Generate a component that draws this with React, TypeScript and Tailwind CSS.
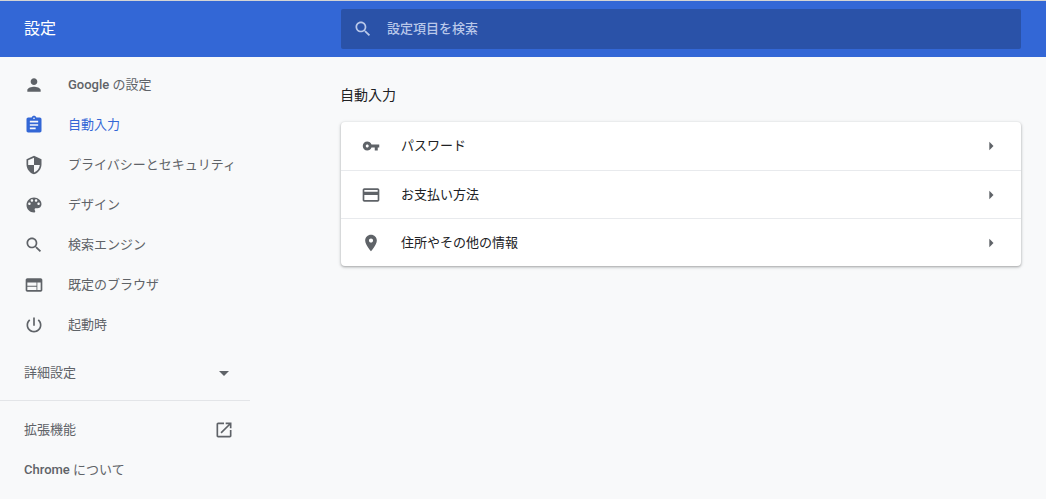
const ICONS = {
  person: 'M12 12c2.21 0 4-1.79 4-4s-1.79-4-4-4-4 1.79-4 4 1.79 4 4 4zm0 2c-2.67 0-8 1.34-8 4v2h16v-2c0-2.66-5.33-4-8-4z',
  assignment: 'M19 3h-4.18C14.4 1.84 13.3 1 12 1c-1.3 0-2.4.84-2.82 2H5c-1.1 0-2 .9-2 2v14c0 1.1.9 2 2 2h14c1.1 0 2-.9 2-2V5c0-1.1-.9-2-2-2zm-7 0c.55 0 1 .45 1 1s-.45 1-1 1-1-.45-1-1 .45-1 1-1zm2 14H7v-2h7v2zm3-4H7v-2h10v2zm0-4H7V7h10v2z',
  security: 'M12 1L3 5v6c0 5.55 3.84 10.74 9 12 5.16-1.26 9-6.45 9-12V5l-9-4zm0 10.99h7c-.53 4.12-3.28 7.79-7 8.94V12H5V6.3l7-3.11v8.8z',
  palette: 'M12 3c-4.97 0-9 4.03-9 9s4.03 9 9 9c.83 0 1.5-.67 1.5-1.5 0-.39-.15-.74-.39-1.01-.23-.26-.38-.61-.38-.99 0-.83.67-1.5 1.5-1.5H16c2.76 0 5-2.24 5-5 0-4.42-4.03-8-9-8zm-5.5 9c-.83 0-1.5-.67-1.5-1.5S5.67 9 6.5 9 8 9.67 8 10.5 7.33 12 6.5 12zm3-4C8.67 8 8 7.33 8 6.5S8.67 5 9.5 5s1.5.67 1.5 1.5S10.33 8 9.5 8zm5 0c-.83 0-1.5-.67-1.5-1.5S13.67 5 14.5 5s1.5.67 1.5 1.5S15.33 8 14.5 8zm3 4c-.83 0-1.5-.67-1.5-1.5S16.67 9 17.5 9s1.5.67 1.5 1.5-.67 1.5-1.5 1.5z',
  search: 'M15.5 14h-.79l-.28-.27C15.41 12.59 16 11.11 16 9.5 16 5.91 13.09 3 9.5 3S3 5.91 3 9.5 5.91 16 9.5 16c1.61 0 3.09-.59 4.23-1.57l.27.28v.79l5 4.99L20.49 19l-4.99-5zm-6 0C7.01 14 5 11.99 5 9.5S7.01 5 9.5 5 14 7.01 14 9.5 11.99 14 9.5 14z',
  web: 'M20 4H4c-1.1 0-1.99.9-1.99 2L2 18c0 1.1.9 2 2 2h16c1.1 0 2-.9 2-2V6c0-1.1-.9-2-2-2zm-5 14H4v-4h11v4zm0-5H4V9h11v4zm5 5h-4V9h4v9z',
  power: 'M13 3h-2v10h2V3zm4.83 2.17l-1.42 1.42C17.99 7.86 19 9.81 19 12c0 3.87-3.13 7-7 7s-7-3.13-7-7c0-2.19 1.01-4.14 2.58-5.42L6.17 5.17C4.23 6.82 3 9.26 3 12c0 4.97 4.03 9 9 9s9-4.03 9-9c0-2.74-1.23-5.18-3.17-6.83z',
  openInNew: 'M19 19H5V5h7V3H5c-1.11 0-2 .9-2 2v14c0 1.1.89 2 2 2h14c1.1 0 2-.9 2-2v-7h-2v7zM14 3v2h3.59l-9.83 9.83 1.41 1.41L19 6.41V10h2V3h-7z',
  key: 'M12.65 10C11.83 7.67 9.61 6 7 6c-3.31 0-6 2.69-6 6s2.69 6 6 6c2.61 0 4.83-1.67 5.65-4H17v4h4v-4h2v-4H12.65zM7 14c-1.1 0-2-.9-2-2s.9-2 2-2 2 .9 2 2-.9 2-2 2z',
  card: 'M20 4H4c-1.11 0-1.99.89-1.99 2L2 18c0 1.11.89 2 2 2h16c1.11 0 2-.89 2-2V6c0-1.11-.89-2-2-2zm0 14H4v-6h16v6zm0-10H4V6h16v2z',
  place: 'M12 2C8.13 2 5 5.13 5 9c0 5.25 7 13 7 13s7-7.75 7-13c0-3.87-3.13-7-7-7zm0 9.5c-1.38 0-2.5-1.12-2.5-2.5s1.12-2.5 2.5-2.5 2.5 1.12 2.5 2.5-1.12 2.5-2.5 2.5z',
  arrowRight: 'M10 17l5-5-5-5v10z',
  arrowDown: 'M7 10l5 5 5-5z',
};

function Icon({ d, className }: { d: string; className: string }) {
  return (
    <svg viewBox="0 0 24 24" fill="currentColor" className={className}>
      <path d={d} />
    </svg>
  );
}

const navItems = [
  { icon: ICONS.person, label: <><span className="font-medium">Google</span> の設定</> , key: 'google' },
  { icon: ICONS.assignment, label: '自動入力', key: 'autofill', active: true },
  { icon: ICONS.security, label: 'プライバシーとセキュリティ', key: 'privacy' },
  { icon: ICONS.palette, label: 'デザイン', key: 'design' },
  { icon: ICONS.search, label: '検索エンジン', key: 'search' },
  { icon: ICONS.web, label: '既定のブラウザ', key: 'browser' },
  { icon: ICONS.power, label: '起動時', key: 'startup' },
];

const rows = [
  { icon: ICONS.key, label: 'パスワード', iconClass: 'mx-px h-[18px] w-[18px]' },
  { icon: ICONS.card, label: 'お支払い方法', iconClass: 'h-5 w-5' },
  { icon: ICONS.place, label: '住所やその他の情報', iconClass: 'h-5 w-5' },
];

export default function App() {
  return (
    <div className="flex h-[499px] flex-col overflow-hidden bg-[#f8f9fa] font-['Roboto','Noto_Sans_CJK_JP',sans-serif] text-[13px] text-[#5f6368]">
      {/* Header */}
      <header className="flex h-[57px] shrink-0 items-center border-t border-[#d4d4d4] bg-[#3367d6] pr-[25px]">
        <h1 className="w-[341px] shrink-0 pl-6 text-base font-normal text-white">設定</h1>
        <div className="flex h-10 flex-1 items-center rounded-[2px] bg-[#2a52a8] pl-[12px] text-[#b9c8ea]">
          <Icon d={ICONS.search} className="h-5 w-5" />
          <span className="ml-[14px] font-medium">設定項目を検索</span>
        </div>
      </header>

      <div className="flex flex-1">
        {/* Sidebar */}
        <nav className="w-[250px] shrink-0 pt-2">
          {navItems.map((item) => (
            <div
              key={item.key}
              className={`flex h-10 items-center pl-6 ${item.active ? 'text-[#3367d6]' : ''}`}
            >
              <Icon d={item.icon} className="h-5 w-5 shrink-0" />
              <span className="ml-6 whitespace-nowrap">{item.label}</span>
            </div>
          ))}
          <div className="mt-2 flex h-10 items-center justify-between pl-6 pr-[14px]">
            <span>詳細設定</span>
            <Icon d={ICONS.arrowDown} className="h-6 w-6" />
          </div>
          <div className="mt-[7px] border-t border-[#e3e5e8] pt-[9px]">
            <div className="flex h-10 items-center justify-between pl-6 pr-4">
              <span>拡張機能</span>
              <Icon d={ICONS.openInNew} className="h-5 w-5" />
            </div>
            <div className="flex h-10 items-center pl-6"><span className="font-medium">Chrome</span>&nbsp;について</div>
          </div>
        </nav>

        {/* Content */}
        <main className="flex-1 pl-[91px] pr-[25px] pt-7">
          <h2 className="-ml-px text-sm font-normal leading-5 text-[#202124]">自動入力</h2>
          <div className="mt-[17px] rounded-[4px] bg-white shadow-[0_1px_2px_0_rgba(60,64,67,0.3),0_1px_3px_1px_rgba(60,64,67,0.15)]">
            {rows.map((row, i) => (
              <div
                key={row.label}
                className={`flex h-12 items-center pl-5 pr-5 text-[#202124] ${i > 0 ? 'border-t border-[#e8eaed]' : ''}`}
              >
                <Icon d={row.icon} className={`${row.iconClass} shrink-0 text-[#5f6368]`} />
                <span className="ml-5 flex-1">{row.label}</span>
                <Icon d={ICONS.arrowRight} className="h-5 w-5 text-[#5f6368]" />
              </div>
            ))}
          </div>
        </main>
      </div>
    </div>
  );
}
